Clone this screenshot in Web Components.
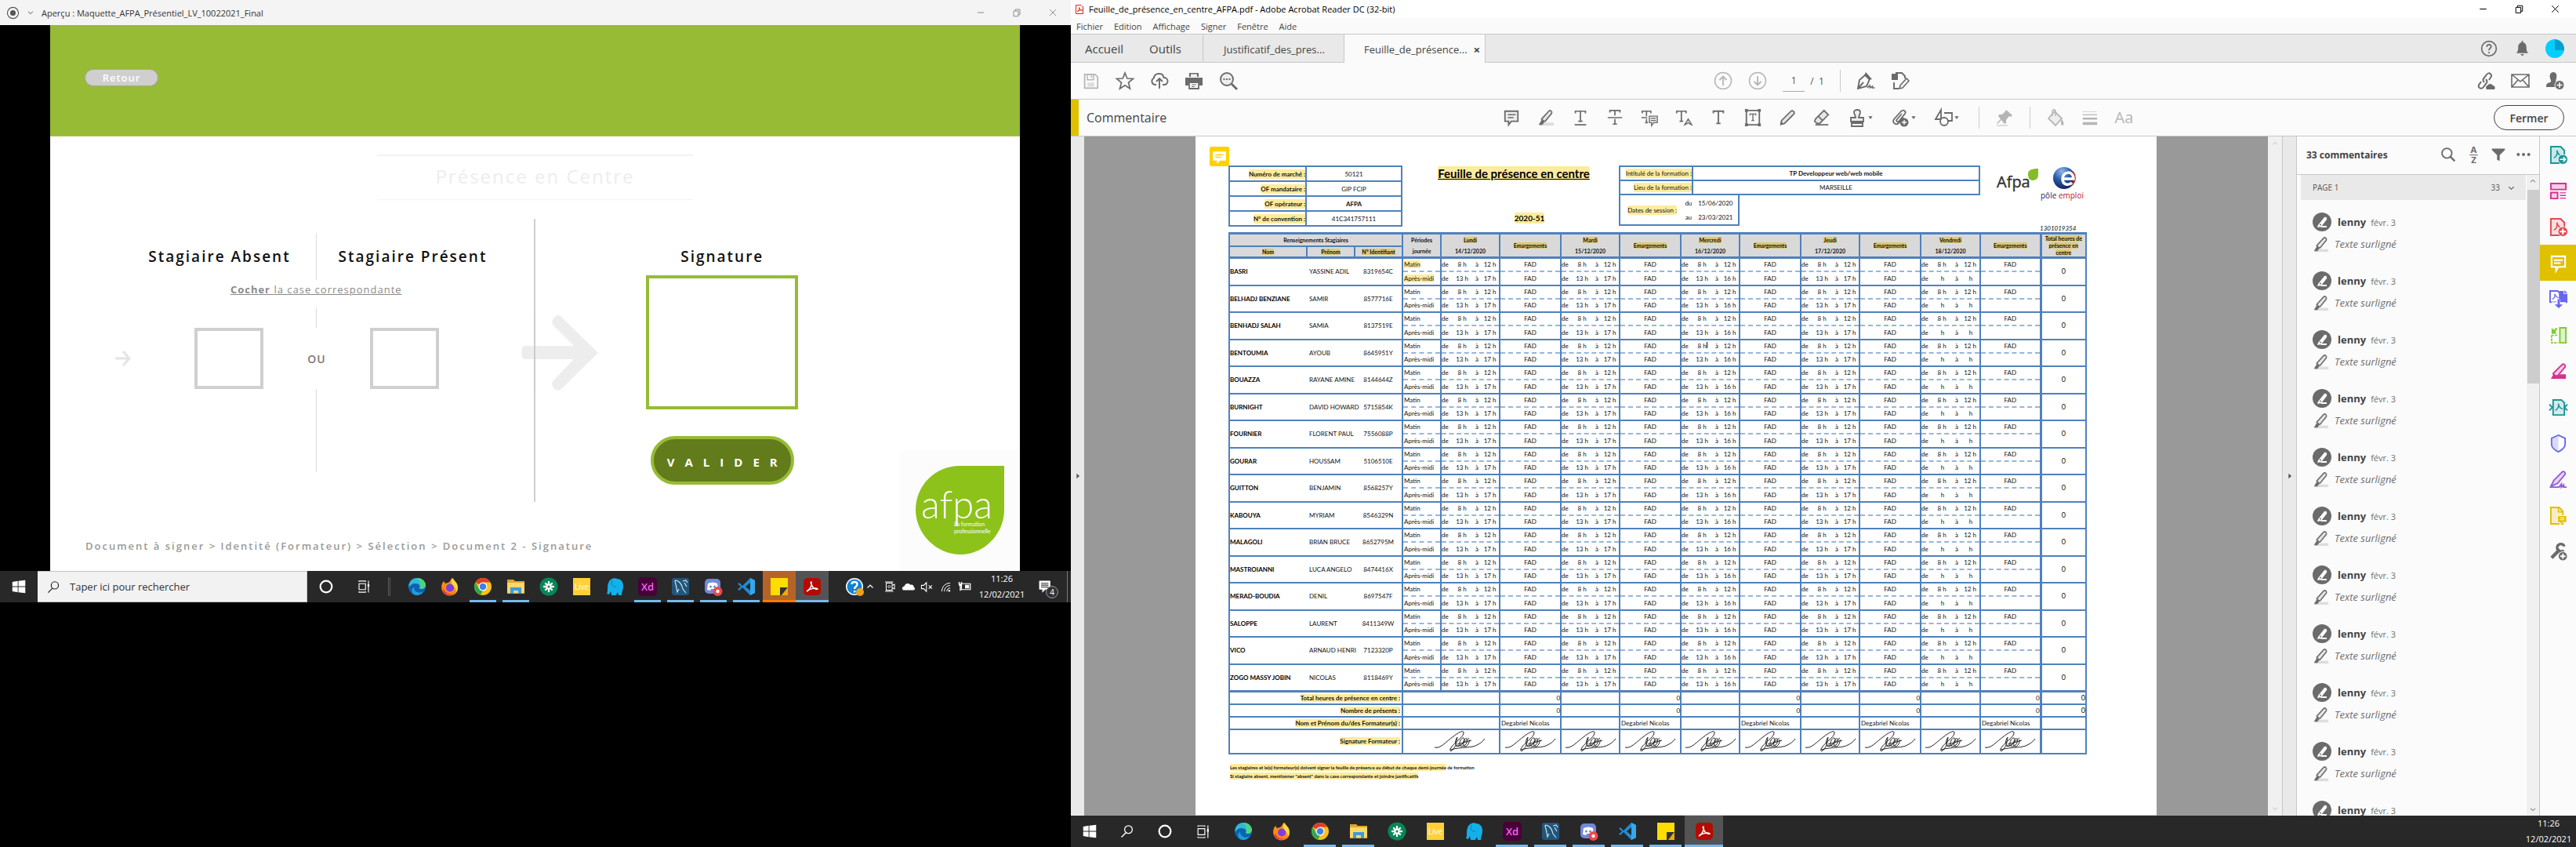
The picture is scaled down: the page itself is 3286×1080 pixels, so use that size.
<!DOCTYPE html>
<html lang="fr">
<head>
<meta charset="utf-8">
<title>Bureau AFPA</title>
<style>
html,body{margin:0;height:100%;background:#000}
body{font-family:"Open Sans","Noto Sans",sans-serif;color:#333}
</style>
</head>
<body>
<dual-desktop>
  <proto-screen slot="left"></proto-screen>
  <reader-screen slot="right"></reader-screen>
</dual-desktop>
<script>
const S = (d, w = 1.6, extra = '') => `<path d="${d}" fill="none" stroke="currentColor" stroke-width="${w}" ${extra}/>`;
const F = (d, c = 'currentColor') => `<path d="${d}" fill="${c}"/>`;
const MARKER = `<path d="M3 19h20v4H3z" fill="#ddd"/><path d="M9 17 6 14 16 3c2-2 5 0 4 3L11 17z" fill="#e6e6e6" stroke="currentColor" stroke-width="1.800"/><path d="m6 15-4 7h5l3-4z" fill="currentColor"/>`;
const ICONS = {
  min: S('M6 12h12', 1.5),
  restore: S('M6 9h9v10H6zM9 9V6h9v10h-3', 1.4),
  close: S('M6 6l12 12M18 6 6 18', 1.4),
  chev: S('M5 9l7 7 7-7', 2.4),
  up: S('M5 15l7-7 7 7', 2.4),
  right: F('M8 4v16l9-8z'),
  caret: F('M4 7h16l-8 11z'),
  target: '<circle cx="12" cy="12" r="10" fill="none" stroke="currentColor" stroke-width="1.600"/><circle cx="12" cy="12" r="5" fill="currentColor"/>',
  pdfdoc: '<path d="M3 1h13l5 5v17H3z" fill="#fff" stroke="#d22" stroke-width="2"/><path d="M6 18c4-2 6-7 5-11 3 6 5 8 8 7-5-1-9 1-13 4z" fill="none" stroke="#d22" stroke-width="2"/>',
  save: S('M3 2h15l4 4v16H3z', 2) + '<path d="M7 2h9v8H7z" fill="none" stroke="currentColor" stroke-width="1.600"/><path d="M7 14h10v6H7z" fill="currentColor" opacity=".4"/><path d="M12 4h2v3h-2z" fill="currentColor"/>',
  star: S('M12 2l2.800 7 7.700.500-6 4.900 2 7.600-6.500-4.300L5.500 22l2-7.600-6-4.900 7.700-.5z', 1.7),
  cloud: S('M8 17H6a4.500 4.500 0 0 1-1-8.500C5 5 8 2.500 12 3c3 0 5 2 5.500 5a4.500 4.500 0 0 1 1 9H16M12 22V10M8 13l4-4 4 4', 1.9),
  print: F('M6 2h12v5H6zM1 8h22v10h-4v-4H5v4H1z') + '<path d="M6 14h12v8H6z" fill="#fff" stroke="currentColor" stroke-width="1.800"/><path d="M9 17h6M9 19.500h4" stroke="currentColor"/><path d="M8 3.500h8V7H8z" fill="#eee"/>',
  find: '<circle cx="10" cy="10" r="8" fill="#eee" stroke="currentColor" stroke-width="1.900"/>' + S('M16 16l7 7', 2.8) + F('M5.500 9h2v2h-2zM9 9h2v2H9zM12.500 9h2v2h-2z'),
  search: '<circle cx="10" cy="10" r="7.500" fill="none" stroke="currentColor" stroke-width="2.200"/>' + S('M15.500 15.500 22 22', 2.8),
  lens: '<circle cx="14" cy="9" r="6.500" fill="none" stroke="currentColor" stroke-width="1.700"/>' + S('M10 14 2 22', 1.8),
  arrowup: '<circle cx="12" cy="12" r="10.500" fill="none" stroke="currentColor" stroke-width="1.500"/>' + S('M12 18V6M7.500 11 12 6.500 16.500 11', 1.8),
  arrowdown: '<circle cx="12" cy="12" r="10.500" fill="none" stroke="currentColor" stroke-width="1.500"/>' + S('M12 6v12M7.500 13l4.500 4.500 4.500-4.500', 1.8),
  sign: S('M2 22 4 11l8-7 5 6-4 9zM2 22l7-8', 1.9) + F('M12 1l8 9-4 1-6-6z') + S('M14 21l3-3 .500 3 3-2 0 2h3', 1.6),
  docedit: F('M1 3h8v8H1z') + S('M6 2h8l4 4v3M4 14v8h6', 1.9) + '<path d="M11 22l1-4 8-9 3 3-8 9z" fill="#fff" stroke="currentColor" stroke-width="1.600"/>',
  help: '<circle cx="12" cy="12" r="10.200" fill="none" stroke="currentColor" stroke-width="1.800"/>' + S('M9 9.500c0-4 6-4 6-.5 0 2.500-3 2.500-3 5.500', 1.9) + F('M11 16.500h2v2h-2z'),
  bell: F('M3 19c3-2 3-5 3-9 0-4 3-6 5-6.500V1h2v2.500c2 .500 5 2.500 5 6.500 0 4 0 7 3 9zM9.500 20.500h5c-1 3-4 3-5 0z'),
  avatar: '<circle cx="12" cy="12" r="12" fill="#00cfff"/><path d="M12 14V0l6 2c4 3 6 7 6 12z" fill="#009fcc"/>',
  link: S('M10 14c-2-2-2-4 0-6l3-4c3-4 8 0 5 4l-2 3M12 10c2 2 2 4 0 6l-3 4c-3 4-9 0-5-4l2-3', 2) + F('M13 23a3 3 0 0 1 1-5 4 4 0 0 1 7 0 3 3 0 0 1 2 5z'),
  mail: S('M1 4h22v16H1zM1 4l11 9 11-9M1 20l8-9M23 20l-8-9', 1.6),
  person: F('M10 1c4 0 5 4 4 8-1 3-1 4 0 5l-2 6H1c0-4 1-5 5-6 2-1 1-3 0-5C5 5 6 1 10 1z') + '<circle cx="18" cy="17.500" r="6" fill="currentColor" stroke="#fbfbfb"/><path d="M18 14v7M14.500 17.500h7" stroke="#fff" stroke-width="1.500"/>',
  note: '<path d="M3 3h18v14h-9l-4 5v-5H3z" fill="#eee" stroke="currentColor" stroke-width="2"/>' + S('M7 8h11M7 12h8', 1.6),
  marker: MARKER,
  tunder: S('M5 6V3h14v3M12 3v14M9 17h6M4 22h16', 1.9),
  tstrike: S('M5 5V2h14v3M12 2v7M12 14v7M9 21h6M2 12h20', 1.9),
  treplace: S('M2 6V3h12v3M8 3v7M8 14v5M6 19h4M1 12h8', 1.8) + '<path d="M12 10h11v9h-5l-3 4v-4h-3z" fill="#eee" stroke="currentColor" stroke-width="1.500"/>' + S('M14 13h7M14 16h7', 1.2),
  tinsert: S('M2 6V3h13v3M8.500 3v14M6 17h5', 1.9) + S('M13 22l5-8 5 8-2.500-1-2.500-2-2.500 2z', 1.5),
  text: S('M5 6V3h14v3M12 3v17M9 20h6', 2),
  tbox: S('M3 2h18v20H3z', 2) + S('M8 9V7h8v2M12 7v9M10 16h4', 1.5) + F('M1 0h4v4H1zM19 0h4v4h-4zM1 20h4v4H1zM19 20h4v4h-4z'),
  pencil: '<path d="M3 21l1-5L17 3c2-2 6 1 4 4L8 20z" fill="#e6e6e6" stroke="currentColor" stroke-width="1.900"/>' + F('M2 23l1-6 4 4z'),
  eraser: '<path d="M3 14 15 2l6 6L9 20H5l-3-3z" fill="#e6e6e6" stroke="currentColor" stroke-width="1.900"/>' + S('M7 10l6 6M3 22h18', 1.8),
  stamp: '<path d="M10 12c0-3-2-4-2-7 0-4 8-4 8 0 0 3-2 4-2 7h6v5H4v-5z" fill="#eee" stroke="currentColor" stroke-width="1.800"/><path d="M5 19h14v4H5z" fill="none" stroke="currentColor" stroke-width="1.800"/>',
  attach: S('M16 12l-6 7c-3 3-9 0-6-5L13 4c3-3 7 0 5 3l-8 10c-2 1-4-1-2-3l6-7', 1.8) + '<circle cx="17" cy="18" r="5.500" fill="currentColor"/><path d="M17 15v6M14 18h6" stroke="#fff" stroke-width="1.400"/>',
  shapes: S('M2 14 9 2v12zM13 6h10v10h-5', 1.8) + '<circle cx="13" cy="17" r="5" fill="#fff" stroke="currentColor" stroke-width="1.800"/>',
  pin: F('M14 2l8 7-2 2-2-1-4 5 0 4-2 1-4-5-5 5-1-1 5-5-3-4 1-2h4l4-4z') + '<path d="M2 21h14v2H2z" fill="#ddd"/>',
  bucket: '<path d="M3 13 11 4l9 9-8 9z" fill="#eee" stroke="currentColor" stroke-width="1.800"/>' + S('M8 10V4c0-3 4-3 4 0v6', 1.4) + F('M20 14c3 3 3 8 1 8s-3-4-1-8z'),
  lines: S('M1 3h22', 1, 'stroke-dasharray="3 1.500"') + F('M1 7h22v1.500H1zM1 12h22v3H1zM1 19h22v4H1z'),
  az: '<text x="12" y="9.500" font-size="13" font-weight="700" text-anchor="middle" fill="currentColor">A</text><text x="12" y="24" font-size="13" font-weight="700" text-anchor="middle" fill="currentColor">Z</text>' + F('M6 11.500h12v1.200H6z'),
  funnel: F('M2 3h20v2l-8 8v9l-4-2v-7L2 5z'),
  dots: '<g fill="currentColor"><circle cx="4" cy="12" r="2.400"/><circle cx="12" cy="12" r="2.400"/><circle cx="20" cy="12" r="2.400"/></g>',
  author: '<circle cx="12" cy="12" r="12" fill="#6b6b6b"/><path d="M7 16l8-10c2-1 4 1 3 3l-7 9-5 1z" fill="#fff"/><path d="M12 17h6v2h-8z" fill="#fff"/><circle cx="10" cy="15.500" r="1" fill="#6b6b6b"/>',
  export: '<path d="M2 1h13l5 5v17H2z" fill="#c9e8e8" stroke="#1c9499" stroke-width="2"/><path d="M6 16c4-2 5-6 4-10 2 6 5 8 8 7" fill="none" stroke="#1c9499" stroke-width="1.600"/><circle cx="18" cy="18" r="6.500" fill="#1c9499" stroke="#fbfbfb"/><path d="M14 18h7M18.500 15l3 3-3 3" stroke="#fff" stroke-width="1.600" fill="none"/>',
  organize: '<g fill="#f6cfe6" stroke="#d8308f" stroke-width="2"><path d="M2 2h20v8H2zM2 14h9v8H2z"/></g><path d="M14 14.500h8M14 18h8M14 21.500h8" stroke="#d8308f" stroke-width="1.500"/>',
  create: '<path d="M2 1h13l5 5v17H2z" fill="#fbdedd" stroke="#e34850" stroke-width="2"/><path d="M6 16c4-2 5-6 4-10 2 6 5 8 8 7" fill="none" stroke="#e34850" stroke-width="1.600"/><circle cx="18" cy="18" r="6.500" fill="#e34850" stroke="#fbfbfb"/><path d="M14 18h8M18 14v8" stroke="#fff" stroke-width="2"/>',
  comment: '<path d="M3 3h18v14h-9l-3 5v-5H3z" fill="none" stroke="#fff" stroke-width="2.200"/><path d="M6 8h12M6 12h9" stroke="#fff" stroke-width="2"/>',
  combine: '<path d="M1 1h10l3 3v12H1z" fill="#fff" stroke="#6767ec" stroke-width="2"/><path d="M4 12c3-1 4-4 3-7 2 4 3 5 5 5" fill="none" stroke="#6767ec" stroke-width="1.400"/><path d="M13 1h6v4h5v12H13z" fill="#6767ec"/><path d="M20 0l4 4h-4z" fill="#6767ec"/><path d="M12 12v8M8 18.500l4.500 5.500 4.500-5.500z" stroke="#fbfbfb" stroke-width="5"/><path d="M11 12h3v7h4l-5.500 5L7 19h4z" fill="#6767ec"/>',
  compress: '<path d="M14 2h8v20h-8z" fill="#ddf3c8" stroke="#7ccc2e" stroke-width="2"/><path d="M3 12v10h9M3 12h9" fill="none" stroke="#7ccc2e" stroke-width="1.800" stroke-dasharray="3 1.500"/><path d="M3 2v8h7l-2-3 3-4-2-1-3 3z" fill="#7ccc2e"/>',
  redact: '<path d="M7 18 5 15 17 3c2-2 5 1 4 3L11 18z" fill="#f6cfe6" stroke="#d8308f" stroke-width="2"/><path d="M6 15l-4 7h20v-6h-8l-3 3z" fill="#d8308f"/>',
  reduce: '<path d="M5 2h11l4 4v16H5z" fill="#d2ecec" stroke="#1c9499" stroke-width="2"/><path d="M8 16c3-2 5-5 4-9 1 5 3 7 6 7" fill="none" stroke="#1c9499" stroke-width="1.600"/><path d="M0 8l4 4-4 4M24 8l-4 4 4 4" fill="none" stroke="#1c9499" stroke-width="2"/>',
  shield: '<path d="M12 1l9 4v8c0 5-5 8-9 10-4-2-9-5-9-10V5z" fill="#fff" stroke="#6767ec" stroke-width="2"/><path d="M12 2.500V22c-4-2-8-5-8-9V6z" fill="#d9d9fb"/>',
  fillsign: '<path d="M2 21 6 13 17 2c2-2 5 1 4 3L11 17z" fill="#e6d5f8" stroke="#9256d9" stroke-width="1.900"/><path d="M1 22h12l3-4v4l3-3v3h4" fill="none" stroke="#9256d9" stroke-width="2"/>',
  sendc: '<path d="M2 1h11l5 5v17H2z" fill="#f6edc8" stroke="#dfc100" stroke-width="2"/><path d="M12 1v6h6" fill="none" stroke="#dfc100" stroke-width="1.600"/><path d="M11 12h12v9h-6l-3 3v-3h-3z" fill="#dfc100" stroke="#fbfbfb"/><path d="M14 15h6M14 17.500h6" stroke="#fff"/>',
  wrench: S('M3 20 14 9', 4.500) + S('M20 5a5 5 0 1 0-1 5', 3.500) + '<circle cx="18" cy="18" r="6" fill="#6b6b6b" stroke="#fbfbfb"/><path d="M18 14.500v7M14.500 18h7" stroke="#fff" stroke-width="2"/>',
  win: F('M3 5.500 10.500 4v7.500H3zM11.500 4 21 3v8.500h-9.500zM3 12.500h7.500V20L3 18.500zM11.500 12.500H21V21l-9.500-1z'),
  cortana: '<circle cx="12" cy="12" r="8" fill="none" stroke="currentColor" stroke-width="2.400"/>',
  taskview: S('M4 7h11v10H4zM4 4V2.500h11V4M4 20v1.500h11V20M20 2v20', 1.500) + F('M18.500 8h3v4h-3z'),
  edge: '<circle cx="12" cy="12" r="11" fill="#0c62b3"/><path d="M1.500 10C3 3 8 1 12 1c7 0 11 5 11 9 0 5-6 6-8 4 2-3-1-6-5-6-3 0-6 1-8.500 5z" fill="#31b8d8"/><path d="M12 1c7 0 11 5 11 9 0 5-6 6-8 4 3-7-1-11-3-13z" fill="#56d96f" opacity=".8"/><path d="M8 13c0 5 6 9 12 5-3 5-8 6-12 4-4-3-3-8 0-9z" fill="#1e9de0"/>',
  firefox: '<path d="M15 1c2 2 3 4 5 6 3 5 3 10-1 14-5 4-13 3-16-2C0 14 1 8 4 5l2 3c2-1 5-1 6-3 1-1 1-3 3-4z" fill="#ff8a16"/><path d="M15 1c2 2 3 4 5 6 3 5 2 9 0 12-1-5-2-7-6-10-1-3 0-6 1-8z" fill="#ffd83b"/><circle cx="12" cy="13.500" r="5" fill="#7a3fe0"/><path d="M4 14c1 7 8 9 14 6-5 4-14 3-15-3z" fill="#e9285f"/>',
  chrome: '<circle cx="12" cy="12" r="11" fill="#fbc116"/><path d="M12 12 2.500 6.500A11 11 0 0 1 21.500 6.500H12z" fill="#e33b2e"/><path d="M2.500 6.500 7.200 14.700 12 17l-3 5.500A11 11 0 0 1 2.500 6.500z" fill="#2da94f"/><circle cx="12" cy="12" r="5.500" fill="#fff"/><circle cx="12" cy="12" r="4.300" fill="#3f7fee"/>',
  explorer: '<path d="M1 3h8l2 2h12v16H1z" fill="#e0a72c"/><path d="M1 7h22v13H1z" fill="#ffd767"/><path d="M5 21v-8h14v8h-4v-4H9v4z" fill="#3c9be0"/>',
  green: '<circle cx="12" cy="12" r="11.500" fill="#078657"/><path d="M12 6v12M6 12h12M8 8l8 8M16 8l-8 8" stroke="#fff" stroke-width="2.400" stroke-linecap="round"/><circle cx="12" cy="12" r="1.500" fill="#078657"/>',
  live: '<path d="M1 1h22v22H1z" fill="#fdd137"/><text x="12" y="16" font-size="10" text-anchor="middle" fill="#fff">Live</text>',
  elephant: '<path d="M4 8C5 2 12 0 15 2c4 0 8 3 8 9s-2 7-2 12h-4l-1-4-2 4H8l-1-5-2 4-3-1c2-4 0-9 2-13z" fill="#13b0ea"/><path d="M9 4c-2 4 0 9 5 8" stroke="#0a7fb5" fill="none"/>',
  xd: '<rect width="24" height="24" rx="5" fill="#470137"/><text x="12" y="17" font-size="13" font-weight="600" text-anchor="middle" fill="#ff61f6">Xd</text>',
  mysql: '<rect x="1" y="1" width="22" height="22" rx="3" fill="#22557b"/><path d="M5 4c5 0 9 5 10 11l4 5M5 4c0 4 2 6 2 10l1 5 2-4M15 5l4-1 2 3M17 7l3 5" fill="none" stroke="#cfe3ee" stroke-width="1.200"/>',
  discord: '<rect x="1" y="2" width="20" height="19" rx="5" fill="#7289da"/><path d="M5 8c4-2 8-2 12 0l1 8-4 1-1-2H9l-1 2-4-1z" fill="#fff"/><circle cx="8.500" cy="12" r="1.500" fill="#7289da"/><circle cx="13.500" cy="12" r="1.500" fill="#7289da"/><circle cx="17.500" cy="18" r="6" fill="#f04747"/><circle cx="17.500" cy="18" r="2.200" fill="#fff"/>',
  vscode: '<path d="M17 1l6 3v16l-6 3L7 13l-4 4-2-1.500L5 12 1 8.500 3 7l4 4zM17 7l-6 5 6 5z" fill="#1f8ad2" fill-rule="evenodd"/><path d="M17 1l6 3v16l-6 3z" fill="#35a8ee"/>',
  sticky: '<path d="M1 1h22v14l-8 8H1z" fill="#ffdd00"/><path d="M13 13h10l-8 10h-2z" fill="#333"/><path d="M15 23l8-9v9z" fill="#f4ab00"/>',
  acrobat: '<rect x="1" y="1" width="22" height="22" rx="5" fill="#b30b00"/><path d="M5 18c4-2 7-7 6-12-1 0-1 1 0 3 2 5 5 7 8 6-2-2-9-1-14 3z" fill="none" stroke="#fff" stroke-width="1.500"/>',
  qmark: '<circle cx="12" cy="12" r="11" fill="#fff"/><circle cx="12" cy="12" r="9.500" fill="#0f83d8"/><path d="M8.500 9c0-4 7-4 7 0 0 3-3.500 3-3.500 6" stroke="#fff" stroke-width="2.400" fill="none"/><path d="M11 17h2.400v2.400H11z" fill="#fff"/><circle cx="19" cy="19" r="5" fill="#f2a11c"/>',
  cam: S('M6 6h10v12H6zM16 10l4-2v8l-4-2M4 4h14M4 20h14', 1.400) + '<circle cx="11" cy="12" r="2" fill="none" stroke="currentColor"/>',
  onedrive: F('M3 18c-3-2-2-6 2-7 1-5 8-6 10-2 4-1 6 1 6 4 3 1 2 5-1 5z'),
  mute: S('M2 9v6h4l5 5V4L6 9zM15 9l6 6M21 9l-6 6', 1.500),
  wifi: S('M4 21C4 11 11 4 21 4M9 21c0-7 5-12 12-12M14 21c0-4 3-7 7-7', 1.600) + '<circle cx="19" cy="19.500" r="2" fill="currentColor"/>',
  battery: S('M6 7h15v10H6z', 1.600) + F('M12 9h7v6h-7zM1 4h2v3h2V4h2v3c0 3-1 4-2 4v8H3v-8C2 11 1 10 1 7z'),
  notif: F('M2 2h18v14h-8l-5 5v-5H2z') + '<path d="M5 6h12M5 9h12M5 12h12" stroke="#2a2a2a" stroke-width="1.400"/>',
  pagenote: '<rect x="0" y="0" width="24" height="24" rx="2" fill="#ffd100"/><path d="M4 6h16v11h-7l-4 4v-4H4z" fill="#fff"/><path d="M7 10h10M7 13h7" stroke="#ffd100" stroke-width="1.500"/>',
};

class Base extends HTMLElement {
  connectedCallback() {
    if (this.shadowRoot) return;
    this.attachShadow({ mode: 'open' }).innerHTML =
      `<style>*{box-sizing:border-box}button,input{font:inherit;color:inherit;margin:0}${this.css()}</style>${this.html()}`;
  }
}
const def = (n, css, html) => customElements.define(n, class extends Base {
  css() { return typeof css === 'function' ? css(this) : css; }
  html() { return typeof html === 'function' ? html(this) : html; }
});
const ic = (n, s = 22) => `<ui-icon name="${n}" size="${s}"></ui-icon>`;

def('ui-icon',
  e => `:host{display:inline-flex;flex:none;width:${e.getAttribute('size')}px;height:${e.getAttribute('size')}px}svg{width:100%;height:100%;display:block;overflow:visible}`,
  e => `<svg viewBox="0 0 24 24" aria-hidden="true">${ICONS[e.getAttribute('name')]}</svg>`);

def('dual-desktop',
  ':host{display:grid;grid-template-columns:1366fr 1920fr;height:100vh;background:#000;overflow:hidden}::slotted(*){min-width:0;min-height:0}',
  '<slot name="left"></slot><slot name="right"></slot>');

/* one button of a tool row; its width comes from the row through --cell */
def('tool-button',
  ':host{display:flex;flex:none;width:var(--cell,44px);justify-content:center;color:#6b6b6b}:host([dim]){color:#b5b5b5}button{border:0;background:none;padding:0;display:flex;align-items:center;gap:1px;font-size:20px;line-height:24px}',
  e => `<button aria-label="${e.getAttribute('icon') || 'police'}">${e.hasAttribute('icon') ? ic(e.getAttribute('icon'), e.getAttribute('size') || 24) : ''}<slot></slot>${e.hasAttribute('menu') ? ic('caret', 8) : ''}</button>`);

/* Windows task bar */
def('task-app',
  `:host{display:flex;width:var(--pitch,42px);height:40px;flex:none}
   button{flex:1;border:0;background:none;padding:0;display:flex;align-items:center;justify-content:center;border-bottom:3px solid transparent;border-top:3px solid transparent;color:#fff;margin:0 4px}
   :host([run]) button{border-bottom-color:#76b9ed}
   :host([on]){background:#545454}:host([alert]){background:#b4642a}:host([alert]) button{border-bottom-color:#ff7a00}
   :host([on]) button,:host([alert]) button{margin:0}`,
  e => `<button aria-label="${e.getAttribute('icon')}">${ic(e.getAttribute('icon'), e.getAttribute('size') || 24)}</button>`);
const APPS = alert => ['edge', 'firefox', 'chrome run', 'explorer run', 'green', 'live', 'elephant', 'xd run', 'mysql run', 'discord run', 'vscode run', 'sticky ' + (alert ? 'alert' : 'run'), 'acrobat on run']
  .map(a => { const [i, ...r] = a.split(' '); return `<task-app icon="${i}" ${r.join(' ')}></task-app>`; }).join('');
const BAR = `:host{display:flex;height:40px;flex:none;background:#282828;color:#fff;align-items:center}
  .apps{display:flex}.clock{width:72px;text-align:center;font-size:11px;line-height:20px;flex:none}
  .sys{--pitch:48px}`;
def('search-taskbar', BAR + `
  label{width:344px;height:40px;background:#f2f2f2;border:2px solid #c4c4c4;border-width:1px 1px 1px 0;display:flex;align-items:center;gap:12px;padding-left:12px;color:#222;flex:none}
  input{border:0;background:none;outline:0;font-size:13px;flex:1;min-width:0;padding:0}input::placeholder{color:#333;opacity:1}
  .sep{width:3px;height:24px;border:solid #5a5a5a;border-width:0 1px;margin:0 13px 0 7px}
  .tray{display:flex;margin-left:auto;--pitch:24px}
  .notif{width:38px;position:relative;display:flex;justify-content:center}.notif b{position:absolute;left:20px;top:8px;width:16px;height:16px;border:1px solid #999;border-radius:50%;background:#333;font-size:10px;line-height:14px;text-align:center;font-weight:400}
  .edge{width:5px;height:40px;border-left:1px solid #777;margin-left:9px}`,
  `<task-app class="sys" icon="win" size="22"></task-app><label>${ic('lens', 17)}<input placeholder="Taper ici pour rechercher" aria-label="Recherche"></label>
  <task-app class="sys" icon="cortana" size="22"></task-app><task-app class="sys" icon="taskview" size="18"></task-app><span class="sep"></span>
  <div class="apps">${APPS(true)}</div>
  <div class="tray">${['qmark 24', 'up 12', 'cam 18', 'onedrive 18', 'mute 17', 'wifi 15', 'battery 18'].map(t => { const [i, s] = t.split(' '); return `<task-app icon="${i}" size="${s}"></task-app>`; }).join('')}</div>
  <div class="clock">11:26<br>12/02/2021</div><div class="notif">${ic('notif', 19)}<b>4</b></div><span class="edge"></span>`);
def('plain-taskbar', BAR + '.apps{--pitch:49px;margin-left:3px}.clock{margin-left:auto;width:70px}',
  `${['win', 'lens', 'cortana', 'taskview'].map((i, n) => `<task-app class="sys" icon="${i}" size="${[22, 18, 22, 19][n]}"></task-app>`).join('')}
  <div class="apps">${APPS(false)}</div><div class="clock">11:26<br>12/02/2021</div>`);

/* left screen: prototype preview */
def('proto-titlebar',
  ':host{display:flex;height:32px;flex:none;align-items:center;background:#f4f4f4;color:#555;font-size:11px;padding:0 15px 0 8px}span{margin-left:9px;color:#333}.v{margin-left:9px;display:flex}nav{margin-left:auto;display:flex;gap:30px;color:#888}button{border:0;padding:0;background:none;display:flex}',
  `${ic('target', 17)}<i class="v">${ic('chev', 10)}</i><span><slot></slot></span><nav><button aria-label="Réduire">${ic('min', 16)}</button><button aria-label="Agrandir">${ic('restore', 16)}</button><button aria-label="Fermer">${ic('close', 16)}</button></nav>`);
def('proto-stage', `
  :host{display:flex;flex-direction:column;flex:1;margin:0 65px 0 64px;background:#fff;position:relative;min-height:0}
  header{height:142px;flex:none;background:#97bb35;border-bottom:1px solid #a8c655;padding:56px 44px}
  .back{width:94px;height:22px;border:1px solid #a5a5a5;border-radius:11px;background:#cfcfcf;color:#fff;font-weight:600;font-size:13px;line-height:18px;letter-spacing:1px;padding:0;display:block}
  h1{margin:23px auto 24px;width:403px;height:58px;border:solid #f3f3f3;border-width:2px 0 1px;text-align:center;font-size:24px;line-height:52px;font-weight:400;letter-spacing:2px;color:#ededed;flex:none}
  main{display:grid;grid-template-columns:1fr 1fr;height:361px;flex:none}
  .choice{padding:18px 0 0 62px;border-right:2px solid #cfcfcf;display:flex;flex-direction:column;align-items:center;position:relative}
  h2{margin:0;font-size:19px;font-weight:600;letter-spacing:2px;color:#111;text-align:center;white-space:nowrap}
  .heads{display:grid;grid-template-columns:1fr 1px 1fr;width:492px;height:55px;line-height:60px}
  .heads i,.line{width:1px;background:#ddd}
  p{margin:0;height:40px;font-size:13px;line-height:34px;letter-spacing:1px;color:#8a8a8a;text-decoration:underline}
  .pick{display:grid;grid-template-columns:101px 88px 136px 88px;align-self:stretch;padding-left:21px;align-items:center}
  .pick svg{width:21px}.pick input{appearance:none;width:88px;height:78px;border:4px solid #cfcfcf;background:#fff}
  .ou{text-align:center;font-weight:600;font-size:14px;letter-spacing:1px;color:#777}
  .big{position:absolute;left:601px;top:123px;width:98px;height:96px}
  .sign{display:flex;flex-direction:column;align-items:center;padding:18px 141px 0 0}.sign h2{line-height:60px;height:54px}
  .pad{width:194px;height:171px;border:4px solid #97bb35}
  .ok{margin-top:34px;width:183px;height:62px;border-radius:31px;border:4px solid #97bb35;background:#627b1b;color:#fff;font-weight:700;font-size:15px;letter-spacing:13px;padding:4px 0 0 13px}
  footer{padding:46px 45px;font-size:13px;line-height:20px;font-weight:600;letter-spacing:2px;color:#999}
  .logo{position:absolute;right:0;bottom:0;width:153px;height:154px;background:#fcfcfc}`,
  `<header><button class="back">Retour</button></header>
  <h1>Présence en Centre</h1>
  <main><section class="choice"><div class="heads"><h2>Stagiaire Absent</h2><i></i><h2>Stagiaire Présent</h2></div>
    <p><b>Cocher</b> la case correspondante</p><span class="line" style="height:26px"></span>
    <div class="pick"><svg viewBox="0 0 21 20"><path d="M0 10h18M10 1l8 9-8 9" fill="none" stroke="#e4e4e4" stroke-width="3"/></svg><input type="checkbox" aria-label="Stagiaire Absent"><span class="ou">OU</span><input type="checkbox" aria-label="Stagiaire Présent"></div>
    <span class="line" style="height:106px"></span>
    <svg class="big" viewBox="0 0 98 96"><path d="M4 39h63L40 12c-3-6 4-14 10-11l48 47-48 47c-6 3-13-4-10-11l27-28H4c-5 0-5-17 0-17z" fill="#ededed"/><path d="M17 0v96" stroke="#ccc" stroke-width="2"/></svg></section>
  <section class="sign"><h2>Signature</h2><div class="pad"></div><button class="ok">VALIDER</button></section></main>
  <footer>Document à signer &gt; Identité (Formateur) &gt; Sélection &gt; Document 2 - Signature</footer>
  <svg class="logo" viewBox="0 0 153 154"><path d="M76 20h57v56c0 31-26 57-56 57s-57-26-57-57 25-56 56-56z" fill="#8dc21a"/><g fill="#fff" font-family="Lato"><text x="27" y="87" font-size="49" font-weight="300">afpa</text><text x="69" y="97" font-size="7">La formation</text><text x="69" y="106" font-size="7">professionnelle</text></g></svg>`);
def('proto-screen', ':host{display:flex;flex-direction:column;height:768px;max-height:100%}',
  '<proto-titlebar>Aperçu : Maquette_AFPA_Présentiel_LV_10022021_Final</proto-titlebar><proto-stage></proto-stage><search-taskbar></search-taskbar>');

/* attendance sheet */
const PEOPLE = `BASRI|YASSINE ADIL|8319654C
BELHADJ BENZIANE|SAMIR|8577716E
BENHADJ SALAH|SAMIA|8137519E
BENTOUMIA|AYOUB|8645951Y
BOUAZZA|RAYANE AMINE|8144644Z
BURNIGHT|DAVID HOWARD|5715854K
FOURNIER|FLORENT PAUL|7556088P
GOURAR|HOUSSAM|5106510E
GUITTON|BENJAMIN|8568257Y
KABOUYA|MYRIAM|8546329N
MALAGOLI|BRIAN BRUCE|8652795M
MASTROIANNI|LUCA ANGELO|8474416X
MERAD-BOUDIA|DENIL|8697547F
SALOPPE|LAURENT|8411349W
VICO|ARNAUD HENRI|7123320P
ZOGO MASSY JOBIN|NICOLAS|8118469Y`.split('\n').map(l => l.split('|'));
const DAYS = [['Lundi', 14, 17], ['Mardi', 15, 17], ['Mercredi', 16, 16], ['Jeudi', 17, 17], ['Vendredi', 18, 0]];
const hours = (a, b, caret) => `<td class="h"><div><span>de</span><span>${a}&nbsp;h${caret ? '<i></i>' : ''}</span><span>à</span><span>${b}&nbsp;h</span></div></td>`;
const SIG = '<svg class="sig" viewBox="0 0 66 28"><path d="M1 22c8 2 15-8 24-14C31 3 39-1 38 4c-1 6-13 12-17 20-1 4 2 3 4 0 4-5 4-9 5-15-4 5-3 12 2 11 6-1 9-9 6-10s-6 6-5 9 7 2 9-3-1-7-3-4-2 9 1 9 6-6 5-9M28 20c6 3 13-8 17-10M30 18l18-5M21 25c14-4 28-2 34-6 4-2 7-4 10-8" fill="none" stroke="#222" stroke-width="1"/></svg>';
def('attendance-table', `
  :host{display:block;font-size:8px;line-height:12px;color:#111}
  table{width:100%;table-layout:fixed;border-collapse:collapse;border:2px solid #4f81bd}
  td,th{padding:0;border:2px solid #4f81bd;font-weight:400;white-space:nowrap}
  thead th{background:#d9d9d9;font-weight:700;font-size:7px;line-height:14px}
  thead tr:first-child th{border-top-width:3px}tbody tr:first-child>*,tfoot tr:first-child>*{border-top-width:3px}
  thead tr{height:16px}thead tr+tr{height:15px}thead tr+tr th{line-height:12px}
  thead .tot{line-height:9px;border-left-width:3px}thead .r1{line-height:12px;border-bottom:1px dotted #4f81bd}
  mark{background:#ddc878;color:inherit;border-radius:2px}tbody mark,tfoot mark{background:#ffeb9c}
  .dash{border-left:2px dashed #4f81bd}thead .nb{border-left:2px dashed #4f81bd}
  tbody tr{height:17px}tbody tr:nth-child(4n+2),tbody tr:last-child{height:18px}
  tbody .n{font-weight:700;color:#000;text-align:left}tbody .p{padding-left:3px;text-align:left}
  tbody .n,tbody .p{border-right:0}tbody .p,tbody .i{border-left:0}.i,.f{text-align:center}.m{padding-left:1px}
  tbody tr.am td:not(.i):not(.p):not(.t){border-bottom:2px dashed #9ab5dc}tbody tr.pm td{border-top:2px dashed #9ab5dc}
  .t{text-align:center;border-left-width:3px;font-size:9px}
  .h div{display:grid;grid-template-columns:12px 28px 10px 1fr;text-align:center}.h span:first-child{text-align:left}
  .h i{display:inline-block;width:1px;height:8px;background:#000;margin-right:-1px}
  tfoot tr{height:16px}tfoot .sg{height:31px}tfoot th{text-align:right;font-weight:700;padding-right:2px}tfoot td{text-align:right}
  tfoot .k{border-left:1px solid #000}tfoot .g{text-align:left;padding-left:1px}tfoot .sg td{text-align:center}tfoot .sg td:nth-child(2){text-align:right;padding-right:17px}
  .sig{width:66px;height:28px;vertical-align:top}`,
  `<table><colgroup>${[99, 61, 61, 49, 75, 78, 75, 78, 75, 78, 75, 78, 76, 77, 58].map(w => `<col style="width:${w}px">`).join('')}</colgroup>
  <thead><tr><th colspan="3" class="r1">Renseignements Stagiaires</th><th rowspan="2">Périodes<br>journée</th>${DAYS.map(d => `<th rowspan="2"><mark>${d[0]}</mark><br>${d[1]}/12/2020</th><th rowspan="2" class="dash"><mark>Emargements</mark></th>`).join('')}<th rowspan="2" class="tot"><mark>Total heures de</mark><br><mark>présence en</mark><br><mark>centre</mark></th></tr>
  <tr><th><mark>Nom</mark></th><th class="nb"><mark>Prénom</mark></th><th class="nb"><mark>N° Identifiant</mark></th></tr></thead>
  <tbody>${PEOPLE.map((p, r) => {
    const mk = t => r ? t : `<mark>${t}</mark>`;
    return `<tr class="am"><th rowspan="2" class="n">${p[0]}</th><td rowspan="2" class="p">${p[1]}</td><td rowspan="2" class="i">${p[2]}</td><td class="m">${mk('Matin')}</td>${DAYS.map((d, c) => hours(8, 12, r === 3 && c === 2) + '<td class="f dash">FAD</td>').join('')}<td rowspan="2" class="t">0</td></tr>
    <tr class="pm"><td class="m">${mk('Après-midi')}</td>${DAYS.map(d => (d[2] ? hours(13, d[2]) : hours('', '')) + `<td class="f dash">${d[2] ? 'FAD' : ''}</td>`).join('')}</tr>`;
  }).join('')}</tbody>
  <tfoot>${['Total heures de présence en centre', 'Nombre de présents'].map(l => `<tr><th colspan="3"><mark>${l} :</mark></th><td colspan="2"></td><td class="k">0</td>${'<td></td><td class="k">0</td>'.repeat(4)}<td class="t" style="text-align:right">0</td></tr>`).join('')}
  <tr><th colspan="3"><mark>Nom et Prénom du/des Formateur(s) :</mark></th><td colspan="2"></td><td class="k g">Degabriel Nicolas</td>${'<td></td><td class="k g">Degabriel Nicolas</td>'.repeat(4)}<td class="t"></td></tr>
  <tr class="sg"><th colspan="3"><mark>Signature Formateur :</mark></th><td colspan="2">${SIG}</td><td class="k">${SIG}</td>${`<td>${SIG}</td><td class="k">${SIG}</td>`.repeat(4)}<td class="t"></td></tr></tfoot></table>`);

def('pdf-page', `
  :host{display:block;width:1226px;max-width:100%;margin:0 auto;background:#fff;position:relative;padding:37px 91px 0 42px;font-family:Lato,"Open Sans",sans-serif;font-size:8px;line-height:12px;color:#111;border-bottom:1px solid #ccc}
  .note{position:absolute;left:18px;top:13px}
  .head{display:grid;grid-template-columns:222px 1fr 461px 134px;height:85px}
  table{border-collapse:collapse;width:100%;align-self:start}td,th{border:2px solid #4f81bd;padding:0;font-weight:400;text-align:center;height:19px}
  th{text-align:right}.b,.info th{font-weight:700}.tt td,.tt th{height:18px}
  mark{background:#ffeb9c;color:inherit;border-radius:2px;padding:1px 0}
  .info th{width:98px}.tt th{width:93px}.dt{width:154px}.dt td,.dt th{border:0}.dt{border:2px solid #4f81bd;border-top:0}
  .title{display:flex;flex-direction:column;align-items:center;padding-left:8px;color:#000}
  h1{font-size:15px;line-height:20px;margin:0 0 38px;font-weight:700}h1 mark{text-decoration:underline;padding:0}
  .title b{font-size:10px;line-height:18px;padding-left:40px}
  .logos{display:flex;flex-wrap:wrap;justify-content:flex-end;align-content:space-between}.logos svg{width:118px;height:52px}
  em{width:58px;font-size:8px;line-height:10px}
  footer{padding:11px 2px;font-size:6px;line-height:11px;font-weight:700}`,
  `<div class="note">${ic('pagenote', 25)}</div>
  <div class="head"><table class="info"><tr><th><mark>Numéro de marché :</mark></th><td>50121</td></tr><tr><th><mark>OF mandataire :</mark></th><td>GIP FCIP</td></tr><tr><th><mark>OF opérateur :</mark></th><td class="b">AFPA</td></tr><tr><th><mark>N° de convention :</mark></th><td>41C341757111</td></tr></table>
  <div class="title"><h1><mark>Feuille de présence en centre</mark></h1><b><mark>2020-51</mark></b></div>
  <div><table class="tt"><tr><th><mark>Intitulé de la formation :</mark></th><td class="b">TP Developpeur web/web mobile</td></tr><tr><th><mark>Lieu de la formation :</mark></th><td>MARSEILLE</td></tr></table>
  <table class="dt"><tr><td rowspan="2"><mark>Dates de session :</mark></td><td>du</td><td>15/06/2020</td></tr><tr><td>au</td><td>23/03/2021</td></tr></table></div>
  <div class="logos"><svg viewBox="0 0 118 52"><defs><radialGradient id="g" cx=".4" cy=".2" r=".8"><stop offset="0" stop-color="#8fb9e8"/><stop offset=".5" stop-color="#2a5ba8"/><stop offset="1" stop-color="#14245c"/></radialGradient></defs><text x="5" y="28" font-size="20" font-family="Open Sans" fill="#333" stroke="#333" stroke-width=".4">Afpa</text><path d="M45 11c0-5 4-7 13-7v8c0 5-4 7-7 7-4 0-6-3-6-8z" fill="#86bc25"/><circle cx="91" cy="16" r="14" fill="url(#g)"/><path d="M102 8c4 6 3 12-1 17" stroke="#c1272d" stroke-width="2.500" fill="none"/><path d="M90 17h13c0-11-14-10-14 0 0 8 8 9 12 5" fill="none" stroke="#fff" stroke-width="3.500"/><text x="61" y="42" font-size="10" font-family="Open Sans" fill="#1f2a5a">pôle <tspan fill="#b5142b">emploi</tspan></text></svg><em>1301019354</em></div></div>
  <attendance-table></attendance-table>
  <footer><mark>Les stagiaires et le(s) formateur(s) doivent signer la feuille de présence au début de chaque demi-journée</mark> de formation<br><mark>Si stagiaire absent, mentionner "absent" dans la case correspondante et joindre justificatifs</mark></footer>`);

/* reader window */
def('comment-item', `
  :host{display:grid;grid-template-columns:24px 1fr;column-gap:8px;height:75px;flex:none;grid-template-rows:26px 30px;align-items:center;color:#6e6e6e}
  .l{display:flex;gap:6px;align-items:baseline;font-size:11px}b{font-size:13px;color:#444}em{font-size:13px;margin-left:-4px}ui-icon{justify-self:start}`,
  `${ic('author', 24)}<div class="l"><b><slot name="who"></slot></b><slot name="date"></slot></div>${ic('marker', 21)}<em><slot></slot></em>`);
def('comments-panel', `
  :host{display:flex;flex-direction:column;width:311px;flex:none;background:#fbfbfb;border:solid #c8c8c8;border-width:0 1px;color:#6b6b6b;overflow:hidden}
  header{display:flex;align-items:center;height:49px;flex:none;padding:0 4px 2px 12px;border-bottom:1px solid #c8c8c8;--cell:32px}header b{font-size:12px;color:#444;margin-right:auto}
  .body{display:flex;flex:1;min-height:0;padding-left:5px}.list{flex:1;min-height:0;overflow:hidden;display:flex;flex-direction:column}
  .pg{display:flex;align-items:center;height:32px;flex:none;background:#e9e9e9;padding:0 13px 0 15px;font-size:10px;color:#555;gap:9px}.pg span{margin-right:auto}
  .items{padding:15px;display:flex;flex-direction:column}
  .sc{width:17px;flex:none;background:#f0f0f0;display:flex;flex-direction:column;align-items:center;border-left:1px solid #fff;color:#555}.sc i{width:15px;height:247px;background:#cdcdcd;margin:3px 0 auto}.sc ui-icon{margin:3px 0}`,
  `<header><b>33 commentaires</b><tool-button icon="search" size="20"></tool-button><tool-button icon="az" size="21"></tool-button><tool-button icon="funnel" size="20"></tool-button><tool-button icon="dots" size="20"></tool-button></header>
  <div class="body"><div class="list"><div class="pg"><span>PAGE 1</span>33 ${ic('chev', 11)}</div>
  <div class="items">${'<comment-item><span slot="who">lenny</span><span slot="date">févr. 3</span>Texte surligné</comment-item>'.repeat(11)}</div></div>
  <div class="sc">${ic('up', 10)}<i></i>${ic('chev', 10)}</div></div>`);
def('tool-rail', `
  :host{display:flex;flex-direction:column;width:46px;flex:none;background:#fbfbfb;color:#6b6b6b;--cell:46px}
  tool-button{height:46px;align-items:center}.on{background:#dfc100}`,
  ['export', 'organize', 'create', 'comment', 'combine', 'compress', 'redact', 'reduce', 'shield', 'fillsign', 'sendc', 'wrench'].map(i => `<tool-button icon="${i}" size="23" ${i === 'comment' ? 'class="on"' : ''}></tool-button>`).join(''));

const T = (i, a = '') => `<tool-button icon="${i}" ${a}></tool-button>`;
def('reader-screen', `
  :host{display:flex;flex-direction:column;background:#fbfbfb}
  div{display:flex;align-items:center}button{border:0;background:none;padding:0;display:flex;align-items:center}
  .title{height:23px;flex:none;background:#fff;color:#000;font-size:11px;padding:0 18px 0 5px;gap:6px}.title nav{margin-left:auto;display:flex;gap:29px}
  .menu{height:20px;flex:none;font-size:11px;padding-left:7px;gap:14px;background:#fafafa;color:#444}
  .tabs{height:37px;flex:none;background:#e9e9e9;border:solid #c8c8c8;border-width:1px 0;align-items:stretch;color:#444}
  .home{font-size:15px;gap:33px;padding-left:18px;width:169px;border-right:1px solid #c8c8c8}
  .tab{width:180px;font-size:13px;border-right:1px solid #c8c8c8;padding:2px 0 0 26px}.tab.on{background:#fafafa;margin-bottom:-1px;gap:8px;padding-left:25px}.tab b{font-size:15px}
  .acc{margin-left:auto;--cell:42px;padding-right:6px}
  .bar{height:47px;flex:none;border-bottom:1px solid #c8c8c8}.bar>div{flex:1}.bar>.mid{flex:none}
  .r{justify-content:flex-end}.bar.one{padding:0 5px 0 3px}.bar.one .mid{padding-right:28px;font-size:12px;color:#555}
  .num{width:28px;height:27px;border:0;border-bottom:1px solid #aaa;background:none;text-align:center;padding:0;margin:0 7px 0 10px}
  s{width:1px;height:28px;background:#ccc;flex:none}.one s{margin:0 10px 0 20px}
  .two{padding-right:15px}.two .tt{font-size:16px;border-left:10px solid #dfc100;height:46px;padding-left:10px;color:#444}.bar.two .r{padding-left:20px}
  .two [menu]{--cell:55px}.two s{margin-left:13px}.two .pin{--cell:64px}.two .pin+s{margin:0 10px 0 0}
  .close{width:90px;height:32px;border:1px solid #444;border-radius:16px;justify-content:center;font-size:14px;font-weight:600;color:#444}
  .work{flex:1;min-height:0;align-items:stretch}
  .strip{width:17px;background:#e9e9e9;justify-content:center;color:#555;flex:none}.strip.b{width:18px;border-left:1px solid #c8c8c8}
  .view{flex:1;background:#999;display:block;overflow:hidden;min-width:0}pdf-page{height:100%}
  .scroll{width:18px;flex:none;background:#f0f0f0;flex-direction:column;justify-content:space-between;padding:4px 0;color:#bbb}`,
  `<div class="title">${ic('pdfdoc', 12)}<span>Feuille_de_présence_en_centre_AFPA.pdf - Adobe Acrobat Reader DC (32-bit)</span><nav><button aria-label="Réduire">${ic('min', 17)}</button><button aria-label="Agrandir">${ic('restore', 17)}</button><button aria-label="Quitter">${ic('close', 17)}</button></nav></div>
  <div class="menu"><button>Fichier</button><button>Edition</button><button>Affichage</button><button>Signer</button><button>Fenêtre</button><button>Aide</button></div>
  <div class="tabs"><div class="home"><button>Accueil</button><button>Outils</button></div><button class="tab">Justificatif_des_pres...</button><button class="tab on">Feuille_de_présence... <b>×</b></button>
    <div class="acc">${T('help', 'size="22"')}${T('bell', 'size="21"')}${T('avatar')}</div></div>
  <div class="bar one"><div>${T('save', 'dim size="21"')}${T('star')}${T('cloud')}${T('print')}${T('find')}</div>
    <div class="mid">${T('arrowup', 'dim')}${T('arrowdown', 'dim')}<input class="num" value="1" aria-label="Page">/&nbsp; 1<s></s>${T('sign')}${T('docedit')}</div>
    <div class="r">${T('link')}${T('mail')}${T('person')}</div></div>
  <div class="bar two"><div class="tt">Commentaire</div>
    <div class="mid">${['note', 'marker', 'tunder', 'tstrike', 'treplace', 'tinsert', 'text', 'tbox', 'pencil', 'eraser'].map(i => T(i, 'size="22"')).join('')}${T('stamp', 'menu')}${T('attach', 'menu')}${T('shapes', 'menu')}<s></s>${T('pin', 'dim class="pin"')}<s></s>${T('bucket', 'dim')}${T('lines', 'dim size="20"')}<tool-button dim>Aa</tool-button></div>
    <div class="r"><button class="close">Fermer</button></div></div>
  <div class="work"><div class="strip">${ic('right', 10)}</div><div class="view"><pdf-page></pdf-page></div><div class="scroll">${ic('up', 10)}${ic('chev', 10)}</div><div class="strip b">${ic('right', 10)}</div><comments-panel></comments-panel><tool-rail></tool-rail></div>
  <plain-taskbar></plain-taskbar>`);
</script>
</body>
</html>
